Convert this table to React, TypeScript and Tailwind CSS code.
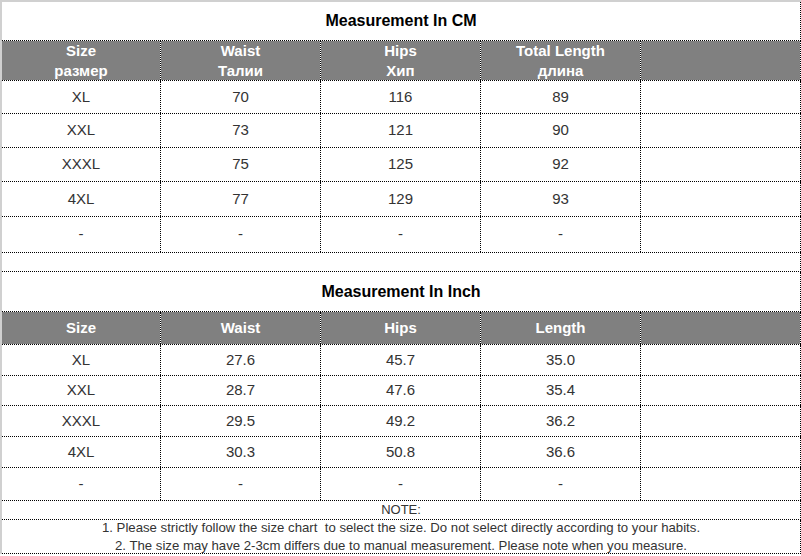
const cmRows = [
  ["XL", "70", "116", "89"],
  ["XXL", "73", "121", "90"],
  ["XXXL", "75", "125", "92"],
  ["4XL", "77", "129", "93"],
  ["-", "-", "-", "-"],
];
const cmHeights = ["h-[32px]", "h-[33px]", "h-[33px]", "h-[34px]", "h-[35px]"];

const inchRows = [
  ["XL", "27.6", "45.7", "35.0"],
  ["XXL", "28.7", "47.6", "35.4"],
  ["XXXL", "29.5", "49.2", "36.2"],
  ["4XL", "30.3", "50.8", "36.6"],
  ["-", "-", "-", "-"],
];
const inchHeights = ["h-[30px]", "h-[29px]", "h-[30px]", "h-[30px]", "h-[32px]"];

const row = "grid grid-cols-[159px_160px_160px_160px_160px] border-b border-dotted border-black";
const cell = "flex flex-col items-center justify-center border-r border-dotted border-black";
const full = "flex items-center justify-center border-b border-r border-dotted border-black";

function HeaderRow({ cols, height }: { cols: string[][]; height: string }) {
  return (
    <div className={row}>
      {[...cols, []].map((lines, i) => (
        <div
          key={i}
          className={`${cell} ${height} bg-[#808080] bg-clip-padding text-[15px] font-bold leading-[20px] text-white`}
        >
          {lines.map((l) => (
            <span key={l}>{l}</span>
          ))}
        </div>
      ))}
    </div>
  );
}

function BodyRows({ rows, heights }: { rows: string[][]; heights: string[] }) {
  return (
    <>
      {rows.map((r, i) => (
        <div key={i} className={row}>
          {[...r, ""].map((v, j) => (
            <div key={j} className={`${cell} ${heights[i]} text-[15px] text-[#333]`}>
              {v}
            </div>
          ))}
        </div>
      ))}
    </>
  );
}

export default function App() {
  return (
    <div className="w-[801px] bg-white font-['Liberation_Sans',Arial,sans-serif]">
      <div className="border-l-2 border-t-2 border-[#d0d0d0]">
        <div className={`${full} h-[39px] text-[16px] font-bold text-black`}>Measurement In CM</div>
        <HeaderRow
          height="h-[39px]"
          cols={[
            ["Size", "размер"],
            ["Waist", "Талии"],
            ["Hips", "Хип"],
            ["Total Length", "длина"],
          ]}
        />
        <BodyRows rows={cmRows} heights={cmHeights} />
        <div className={`${full} h-[19px]`} />

        <div className={`${full} h-[40px] text-[16px] font-bold text-black`}>Measurement In Inch</div>
        <HeaderRow height="h-[32px]" cols={[["Size"], ["Waist"], ["Hips"], ["Length"]]} />
        <BodyRows rows={inchRows} heights={inchHeights} />

        <div className={`${full} h-[19px] text-[13px] text-[#333]`}>NOTE:</div>
        <div className={`${full} h-[34px] flex-col text-[13.2px] leading-[18px] text-[#333]`}>
          <p>1. Please strictly follow the size chart&nbsp; to select the size. Do not select directly according to your habits.</p>
          <p>2. The size may have 2-3cm differs due to manual measurement. Please note when you measure.</p>
        </div>
      </div>
    </div>
  );
}
